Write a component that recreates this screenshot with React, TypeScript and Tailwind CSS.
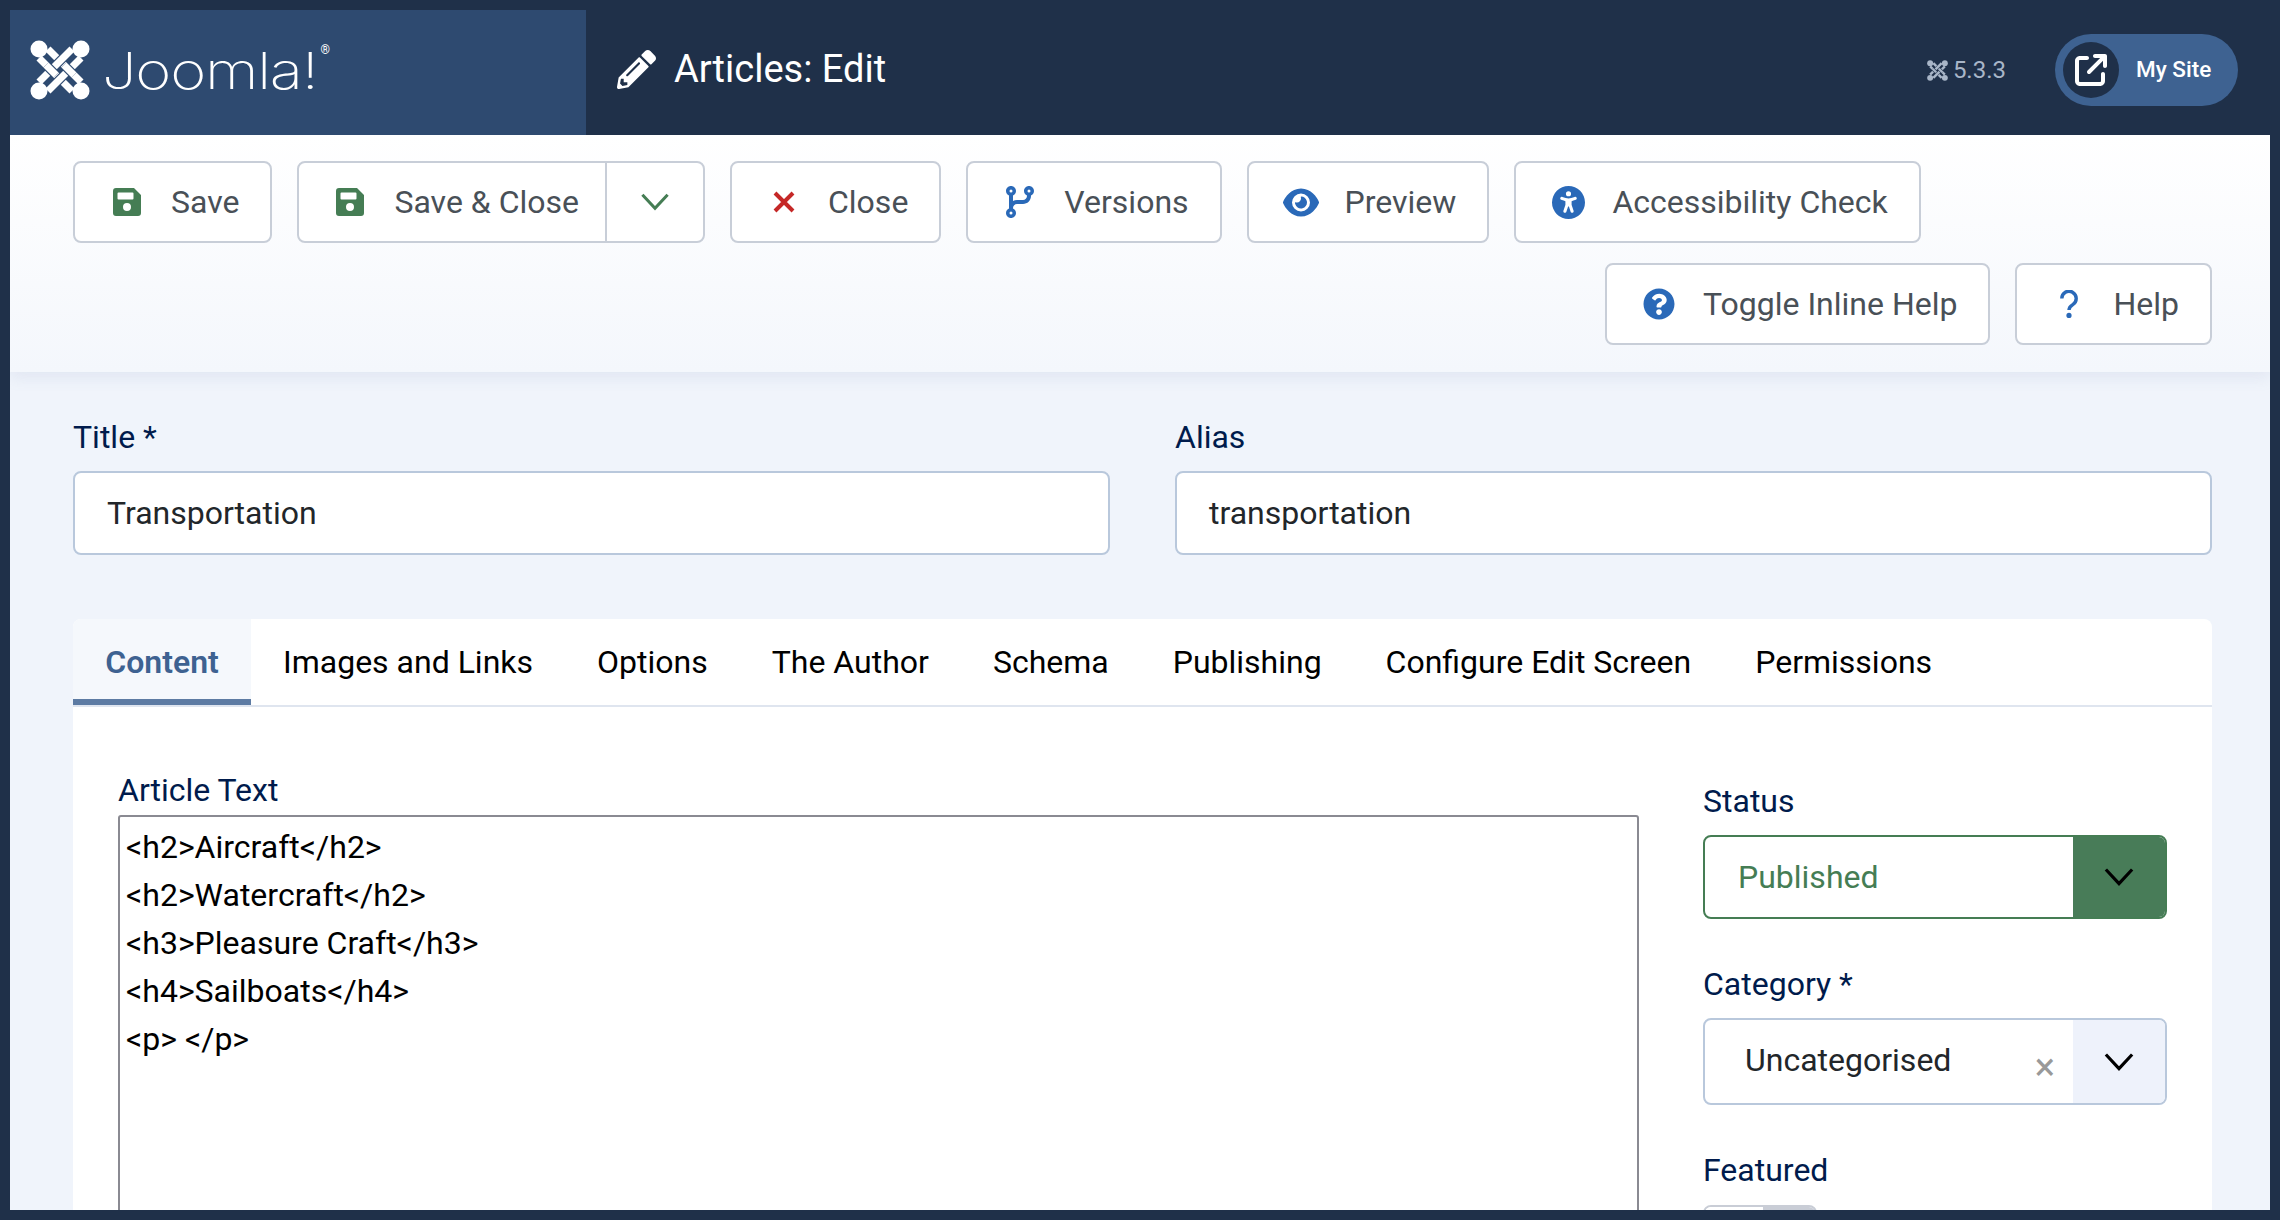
import { FaQuestionCircle, FaPencilAlt } from 'react-icons/fa'
import { FaCodeBranch, FaEye, FaUniversalAccess, FaArrowUpRightFromSquare } from 'react-icons/fa6'

type IconProps = { className: string }

function Chevron({ className }: IconProps) {
  return (
    <svg viewBox="0 0 32 20" fill="none" stroke="currentColor" strokeWidth="3.4" className={className}>
      <path d="M2 2l14 15L30 2" />
    </svg>
  )
}

function SaveIcon({ className }: IconProps) {
  return (
    <svg viewBox="0 0 28 28" fill="currentColor" fillRule="evenodd" className={className}>
      <path d="M3 0h18l7 7v18a3 3 0 01-3 3H3a3 3 0 01-3-3V3a3 3 0 013-3zM5.5 4.5a1 1 0 00-1 1v5a1 1 0 001 1h14a1 1 0 001-1v-5a1 1 0 00-1-1zM14 15a4 4 0 100 8 4 4 0 000-8z" />
    </svg>
  )
}

function CloseIcon({ className }: IconProps) {
  return (
    <svg viewBox="0 0 22 22" fill="none" stroke="currentColor" strokeWidth="4" className={className}>
      <path d="M2 2l18 18M20 2L2 20" />
    </svg>
  )
}

function HelpIcon({ className }: IconProps) {
  return (
    <svg viewBox="0 0 18 28" fill="none" className={className}>
      <path d="M1.8 8.5a7.2 7.2 0 1 1 11 6.1c-2.3 1.4-3.8 2.6-3.8 5.4" stroke="currentColor" strokeWidth="3.4" />
      <circle cx="9" cy="25.4" r="2.6" fill="currentColor" />
    </svg>
  )
}

// Four corner balls joined by a woven pair of crossing bands
function JoomlaMark({ className, halo }: { className: string; halo: string }) {
  const band = (d: string) => (
    <g>
      <path d={d} stroke={halo} strokeWidth="9.5" />
      <path d={d} stroke="currentColor" strokeWidth="7" />
    </g>
  )
  return (
    <svg viewBox="0 0 60 60" fill="none" className={className}>
      {band('M18 9L51 42')}
      {band('M9 18L42 51')}
      {band('M42 9L9 42')}
      {band('M51 18L18 51')}
      {band('M34 25L44 35')}
      {band('M16 25L26 35')}
      <g fill="currentColor">
        <circle cx="9" cy="9" r="8.5" />
        <circle cx="51" cy="9" r="8.5" />
        <circle cx="9" cy="51" r="8.5" />
        <circle cx="51" cy="51" r="8.5" />
      </g>
    </svg>
  )
}

type ToolButtonProps = {
  icon: React.ReactNode
  label: string
  className?: string
}

function ToolButton({ icon, label, className = '' }: ToolButtonProps) {
  return (
    <button className={`h-[82px] flex items-center pl-[34px] pr-[31px] bg-white border-2 border-[#c8ced8] rounded-[8px] text-[#495057] ${className}`}>
      <span className="w-[36px] flex justify-center mr-[26px]">{icon}</span>
      <span>{label}</span>
    </button>
  )
}

const tabs = ['Images and Links', 'Options', 'The Author', 'Schema', 'Publishing', 'Configure Edit Screen', 'Permissions']
const lines = ['<h2>Aircraft</h2>', '<h2>Watercraft</h2>', '<h3>Pleasure Craft</h3>', '<h4>Sailboats</h4>', '<p> </p>']

export default function App() {
  return (
    <div className="w-[2280px] h-[1220px] bg-[#1f3049] p-[10px] flex flex-col overflow-hidden font-['Roboto',sans-serif] text-[32px]">
      {/* Header */}
      <header className="h-[125px] shrink-0 flex items-center text-white">
        <div className="w-[576px] h-full bg-[#2e4a70] flex items-center pl-[20px] pb-[6px]">
          <JoomlaMark className="w-[60px] h-[60px] text-white" halo="#2e4a70" />
          <div className="relative ml-[12px] mt-[2px] w-[216px]">
            <span className="block origin-left scale-x-[1.23] text-[50px] font-['Inter',sans-serif] font-extralight tracking-[-1px] leading-none">Joomla!</span>
            <span className="absolute -right-[12px] -top-[2px] text-[12px] leading-none">®</span>
          </div>
        </div>
        <div className="flex items-center ml-[31px] pb-[7px]">
          <FaPencilAlt className="w-[39px] h-[39px]" />
          <h1 className="ml-[18px] text-[38px] leading-none">Articles: Edit</h1>
        </div>
        <div className="ml-auto flex items-center pr-[32px] pb-[5px]">
          <JoomlaMark className="w-[21px] h-[21px] text-[#a9b6c8]" halo="#1f3049" />
          <span className="ml-[5px] text-[24px] text-[#a9b6c8]">5.3.3</span>
          <div className="ml-[49px] w-[183px] h-[72px] rounded-full bg-[#3e6291] flex items-center pl-[8px]">
            <span className="w-[56px] h-[56px] rounded-full bg-[#1f3049] flex items-center justify-center">
              <FaArrowUpRightFromSquare className="w-[32px] h-[32px]" />
            </span>
            <span className="ml-[17px] text-[22.5px] font-medium">My Site</span>
          </div>
        </div>
      </header>

      <main className="flex-1 min-h-0 overflow-hidden bg-[#f0f4fb]">
        {/* Toolbar */}
        <div className="h-[237px] bg-gradient-to-b from-white to-[#f4f7fc] shadow-[0_6px_14px_rgba(120,140,180,0.12)] pt-[26px] pl-[63px] pr-[58px]">
          <div className="flex flex-wrap gap-x-[25px] gap-y-[20px]">
            <ToolButton icon={<SaveIcon className="w-[28px] h-[28px] text-[#457d54]" />} label="Save" />
            <div className="h-[82px] flex bg-white border-2 border-[#c8ced8] rounded-[8px] text-[#495057]">
              <button className="flex items-center pl-[33px] pr-[26px]">
                <span className="w-[36px] flex justify-center mr-[26px]"><SaveIcon className="w-[28px] h-[28px] text-[#457d54]" /></span>
                <span>Save &amp; Close</span>
              </button>
              <button className="w-[98px] flex items-center justify-center border-l-2 border-[#c8ced8]">
                <Chevron className="w-[30px] h-[18px] text-[#457d54]" />
              </button>
            </div>
            <ToolButton icon={<CloseIcon className="w-[22px] h-[22px] text-[#c52827]" />} label="Close" />
            <ToolButton icon={<FaCodeBranch className="w-[28px] h-[32px] text-[#2a69b8]" />} label="Versions" />
            <ToolButton icon={<FaEye className="w-[37px] h-[33px] text-[#2a69b8]" />} label="Preview" />
            <ToolButton icon={<FaUniversalAccess className="w-[33px] h-[33px] text-[#2a69b8]" />} label="Accessibility Check" />
            <ToolButton className="ml-auto" icon={<FaQuestionCircle className="w-[32px] h-[32px] text-[#2a69b8]" />} label="Toggle Inline Help" />
            <ToolButton icon={<HelpIcon className="w-[18px] h-[28px] text-[#2a69b8]" />} label="Help" />
          </div>
        </div>

        <div className="pt-[46px] pl-[63px] pr-[58px]">
          {/* Title and alias */}
          <div className="flex gap-[65px]">
            <div className="w-[1037px]">
              <label className="block text-[#001b4c] leading-[38px]">Title *</label>
              <div className="mt-[15px] h-[84px] flex items-center pl-[32px] bg-white border-2 border-[#b9c8dc] rounded-[8px] text-[#22262a]">Transportation</div>
            </div>
            <div className="flex-1">
              <label className="block text-[#001b4c] leading-[38px]">Alias</label>
              <div className="mt-[15px] h-[84px] flex items-center pl-[32px] bg-white border-2 border-[#b9c8dc] rounded-[8px] text-[#22262a]">transportation</div>
            </div>
          </div>

          {/* Tabs */}
          <div className="mt-[64px] bg-white rounded-t-[8px] h-[700px]">
            <div className="h-[88px] flex border-b-2 border-[#dfe5ef] text-black">
              <div className="w-[178px] h-[86px] pt-[6px] bg-[#f5f8fc] border-b-[6px] border-[#5d7ba3] rounded-tl-[8px] flex items-center justify-center font-semibold text-[#3e6291]">Content</div>
              {tabs.map(t => (
                <div key={t} className="h-[86px] px-[32px] flex items-center">{t}</div>
              ))}
            </div>

            <div className="flex pl-[45px] pr-[45px] pt-[64px]">
              <div className="w-[1521px]">
                <label className="block text-[#001b4c] leading-[38px]">Article Text</label>
                <div className="mt-[6px] h-[500px] bg-white border-2 border-[#8a8a92] rounded-[3px] pt-[6px] pl-[6px] text-black">
                  {lines.map(l => (
                    <div key={l} className="leading-[48px] whitespace-pre">{l}</div>
                  ))}
                </div>
              </div>
              <div className="ml-[64px] flex-1 pt-[11px]">
                <label className="block text-[#001b4c] leading-[38px]">Status</label>
                <div className="mt-[15px] h-[84px] flex border-2 border-[#457d54] rounded-[8px] overflow-hidden text-[#457d54]">
                  <div className="flex-1 flex items-center pl-[33px]">Published</div>
                  <div className="w-[92px] bg-[#487c58] flex items-center justify-center">
                    <Chevron className="w-[30px] h-[20px] text-black" />
                  </div>
                </div>
                <label className="block mt-[46px] text-[#001b4c] leading-[38px]">Category *</label>
                <div className="mt-[15px] h-[87px] flex border-2 border-[#b9c8dc] rounded-[8px] overflow-hidden">
                  <div className="flex-1 flex items-center pl-[40px] pb-[4px] text-[#22262a] relative">
                    Uncategorised
                    <span className="absolute right-[18px] top-[28px] text-[38px] leading-none text-[#999]">×</span>
                  </div>
                  <div className="w-[92px] bg-[#eef2fb] flex items-center justify-center">
                    <Chevron className="w-[30px] h-[20px] text-black" />
                  </div>
                </div>
                <label className="block mt-[46px] text-[#001b4c] leading-[38px]">Featured</label>
                <div className="mt-[16px] w-[114px] h-[40px] flex border-2 border-[#c9cdd6] rounded-[8px] overflow-hidden">
                  <div className="w-[58px] bg-white" />
                  <div className="flex-1 bg-[#c9cdd6]" />
                </div>
              </div>
            </div>
          </div>
        </div>
      </main>
    </div>
  )
}
